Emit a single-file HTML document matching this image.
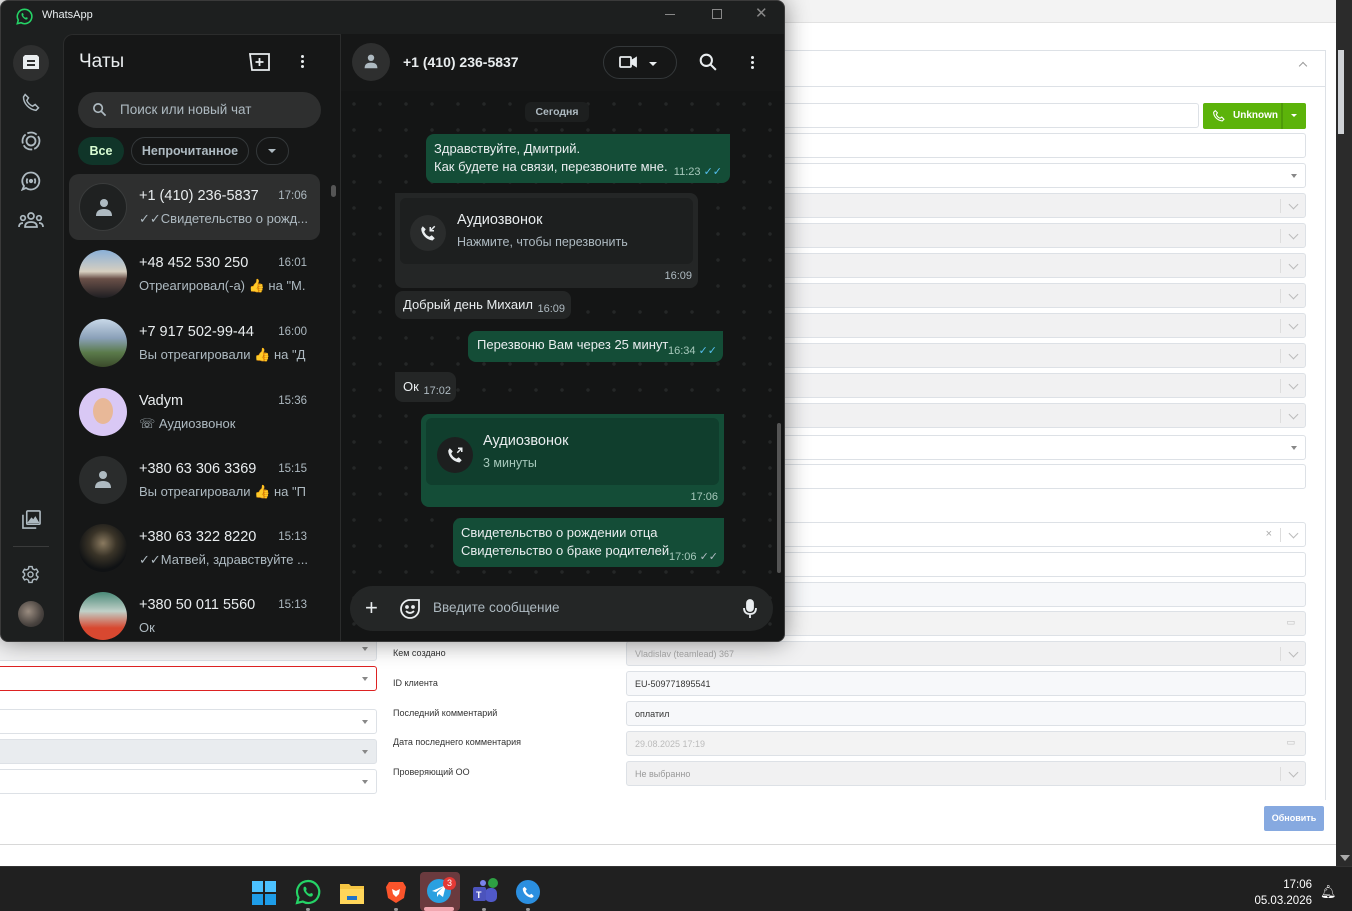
<!DOCTYPE html>
<html><head><meta charset="utf-8"><style>
*{box-sizing:border-box;margin:0;padding:0}
body{width:1352px;height:911px;overflow:hidden;background:#fff;font-family:"Liberation Sans","DejaVu Sans",sans-serif;position:relative}
.a{position:absolute}
.f{position:absolute;border:1px solid #dde1e6;border-radius:3px;background:#fff;height:25px}
.g{background:#f1f1f2}
.lg{background:#f7f8fa}
.dd::after{content:"";position:absolute;right:8px;top:10px;border:3px solid transparent;border-top:4px solid #888}
.ch::after{content:"";position:absolute;right:8px;top:7px;width:6px;height:6px;border-right:1px solid #bbb;border-bottom:1px solid #bbb;transform:rotate(45deg)}
.ch::before{content:"";position:absolute;right:24px;top:5px;width:1px;height:14px;background:#ddd}
.lbl{position:absolute;left:393px;font-size:9px;color:#333}
.ft{position:absolute;font-size:9px;left:8px;top:7px;color:#333}
.wa{position:absolute;left:0;top:0;width:785px;height:642px;background:#1d1f1f;border-radius:8px;overflow:hidden;box-shadow:0 0 24px rgba(0,0,0,.45);border:1px solid #3a3a3a;color:#e9edef}
.s{color:#aebac1}
.it{position:absolute;left:68px;width:251px;height:66px}
.av{position:absolute;left:10px;top:9px;width:48px;height:48px;border-radius:50%;background:#2a2c2c;overflow:hidden}
.nm{position:absolute;left:70px;top:14px;font-size:14.5px;color:#e9edef}
.tm{position:absolute;right:13px;top:16px;font-size:11.5px;color:#aebac1}
.pv{position:absolute;left:70px;top:37px;font-size:13px;color:#aebac1;white-space:nowrap}
.bo{position:absolute;background:#144d37;border-radius:8px;font-size:13px;color:#e9edef;white-space:nowrap}
.bi{position:absolute;background:#242626;border-radius:8px;font-size:13px;color:#e9edef;white-space:nowrap}
.t{font-size:11px;color:#aebac1;white-space:nowrap}
</style></head><body>

<div class="a" style="left:0;top:0;width:1336px;height:23px;background:#f3f3f3;border-bottom:1px solid #e2e2e2"></div>
<div class="a" style="left:0;top:50px;width:1326px;height:1px;background:#dde1e6"></div>
<div class="a" style="left:0;top:86px;width:1326px;height:1px;background:#dde1e6"></div>
<div class="a" style="left:1325px;top:50px;width:1px;height:750px;background:#dde1e6"></div>
<div class="a" style="left:1300px;top:63px;width:6px;height:6px;border-left:1px solid #999;border-top:1px solid #999;transform:rotate(45deg)"></div>
<div class="a" style="left:1336px;top:0;width:16px;height:866px;background:#2b2b2b"></div>
<div class="a" style="left:1338px;top:50px;width:6px;height:84px;background:#cfd2d6"></div>
<div class="a" style="left:1340px;top:855px;border:5px solid transparent;border-top:6px solid #aaa"></div>

<div class="f" style="left:780px;top:103px;width:419px"></div>
<div class="a" style="left:1203px;top:103px;width:103px;height:26px;background:#5cb30a;border-radius:2px;color:#fff;font-size:10px;font-weight:bold">
<svg class="a" style="left:9px;top:6px" width="13" height="13" viewBox="0 0 24 24"><path d="M6 3l4 4-2 3c1 3 4 6 7 7l3-2 4 4-3 3C10 21 3 14 3 6z" fill="none" stroke="#fff" stroke-width="2"/></svg>
<span class="a" style="left:30px;top:7px">Unknown</span>
<div class="a" style="left:78px;top:0;width:2px;height:26px;background:#4e9b09"></div>
<div class="a" style="left:88px;top:11px;border:3px solid transparent;border-top:3px solid #fff"></div></div>
<div class="f" style="left:780px;top:133px;width:526px"></div>
<div class="f dd" style="left:780px;top:163px;width:526px"></div>
<div class="f g ch" style="left:780px;top:193px;width:526px"></div>
<div class="f g ch" style="left:780px;top:223px;width:526px"></div>
<div class="f g ch" style="left:780px;top:253px;width:526px"></div>
<div class="f g ch" style="left:780px;top:283px;width:526px"></div>
<div class="f g ch" style="left:780px;top:313px;width:526px"></div>
<div class="f g ch" style="left:780px;top:343px;width:526px"></div>
<div class="f g ch" style="left:780px;top:373px;width:526px"></div>
<div class="f g ch" style="left:780px;top:403px;width:526px"></div>
<div class="f dd" style="left:780px;top:435px;width:526px"></div>
<div class="f" style="left:780px;top:464px;width:526px"></div>
<div class="f ch" style="left:780px;top:522px;width:526px"><span class="a" style="right:33px;top:5px;font-size:11px;color:#aaa">×</span></div>
<div class="f" style="left:780px;top:552px;width:526px"></div>
<div class="f lg" style="left:780px;top:582px;width:526px"></div>
<div class="f g" style="left:780px;top:611px;width:526px;background:#f3f3f3"><span class="a" style="right:10px;top:5px;font-size:9px;color:#bbb">▭</span></div>
<div class="f g ch" style="left:626px;top:641px;width:680px"><span class="ft" style="color:#aaa">Vladislav (teamlead) 367</span></div>
<div class="f lg" style="left:626px;top:671px;width:680px"><span class="ft">EU-509771895541</span></div>
<div class="f lg" style="left:626px;top:701px;width:680px"><span class="ft">оплатил</span></div>
<div class="f" style="left:626px;top:731px;width:680px;background:#f3f3f3"><span class="ft" style="color:#bbb">29.08.2025 17:19</span><span class="a" style="right:10px;top:5px;font-size:9px;color:#bbb">▭</span></div>
<div class="f g ch" style="left:626px;top:761px;width:680px"><span class="ft" style="color:#999">Не выбранно</span></div>
<div class="lbl" style="top:648px">Кем создано</div>
<div class="lbl" style="top:678px">ID клиента</div>
<div class="lbl" style="top:708px">Последний комментарий</div>
<div class="lbl" style="top:737px">Дата последнего комментария</div>
<div class="lbl" style="top:767px">Проверяющий ОО</div>
<div class="f dd g" style="left:-3px;top:636px;width:380px"></div>
<div class="f dd" style="left:-3px;top:666px;width:380px;border-color:#d22"></div>
<div class="f dd" style="left:-3px;top:709px;width:380px"></div>
<div class="f dd" style="left:-3px;top:739px;width:380px;background:#e9ecef"></div>
<div class="f dd" style="left:-3px;top:769px;width:380px"></div>
<div class="a" style="left:1264px;top:806px;width:60px;height:25px;background:#86a9e0;border-radius:2px;color:#fff;font-size:9px;font-weight:bold;text-align:center;line-height:25px">Обновить</div>
<div class="a" style="left:0;top:844px;width:1336px;height:1px;background:#d8d8d8"></div>

<div class="a" style="left:0;top:866px;width:1352px;height:45px;background:#202020;border-top:1px solid #333"></div>
<svg class="a" style="left:252px;top:881px" width="24" height="24"><rect x="0" y="0" width="11" height="11" fill="#4cc2ff"/><rect x="13" y="0" width="11" height="11" fill="#4cc2ff"/><rect x="0" y="13" width="11" height="11" fill="#1e9de8"/><rect x="13" y="13" width="11" height="11" fill="#1e9de8"/></svg>
<svg class="a" style="left:295px;top:879px" width="26" height="26" viewBox="0 0 26 26"><path d="M13 2a11 11 0 0 0-9.5 16.5L2 24l5.7-1.5A11 11 0 1 0 13 2z" fill="none" stroke="#25d366" stroke-width="2.2"/><path d="M9 8c1-1 2 0 2.5 1.5s-1 1.5 0 3 2 2.3 3 2.3 1.5-1 2.5-.5 1 1.5.5 2.5-2.5 1.5-5-.5-4-4.5-4-6 0-1.8.5-2.3z" fill="#25d366"/></svg>
<svg class="a" style="left:340px;top:882px" width="24" height="22"><path d="M0 2h9l2 2h13v18H0z" fill="#f5c542"/><rect x="0" y="7" width="24" height="15" fill="#ffd65a"/><rect x="7" y="14" width="10" height="4" fill="#1f73c8"/></svg>
<svg class="a" style="left:386px;top:880px" width="20" height="24"><path d="M3 2h14l3 5-2 11-8 5-8-5L0 7z" fill="#fb542b"/><path d="M6 9l4 2 4-2-1 5-3 3-3-3z" fill="#fff"/></svg>
<div class="a" style="left:420px;top:872px;width:40px;height:39px;background:#6a3a3e;border-radius:4px"></div>
<div class="a" style="left:427px;top:879px;width:24px;height:24px;border-radius:50%;background:#2aa0e0"></div>
<svg class="a" style="left:432px;top:885px" width="14" height="12"><path d="M0 6L14 0 11 12 7 9 5 12 5 8 11 2 4 7z" fill="#fff"/></svg>
<div class="a" style="left:443px;top:877px;width:13px;height:13px;border-radius:50%;background:#e53935;color:#fff;font-size:9px;text-align:center;line-height:13px">3</div>
<div class="a" style="left:424px;top:907px;width:30px;height:4px;background:#f1a7b0;border-radius:2px"></div>
<svg class="a" style="left:471px;top:878px" width="30" height="28"><circle cx="12" cy="5" r="3" fill="#7b83eb"/><rect x="14" y="10" width="12" height="14" rx="5" fill="#5059c9"/><rect x="2" y="9" width="13" height="14" rx="2" fill="#4b53bc"/><text x="5" y="20" font-size="9" fill="#fff" font-family="Liberation Sans" font-weight="bold">T</text><circle cx="22" cy="5" r="5" fill="#2ea043"/></svg>
<div class="a" style="left:516px;top:880px;width:24px;height:24px;border-radius:50%;background:#2b8fe0"></div>
<svg class="a" style="left:521px;top:885px" width="14" height="14" viewBox="0 0 24 24"><path d="M6 3l4 4-2 3c1 3 4 6 7 7l3-2 4 4-3 3C10 21 3 14 3 6z" fill="#fff"/></svg>
<div class="a" style="left:306px;top:908px;width:4px;height:3px;background:#999;border-radius:2px"></div>
<div class="a" style="left:394px;top:908px;width:4px;height:3px;background:#999;border-radius:2px"></div>
<div class="a" style="left:482px;top:908px;width:4px;height:3px;background:#999;border-radius:2px"></div>
<div class="a" style="left:526px;top:908px;width:4px;height:3px;background:#999;border-radius:2px"></div>
<div class="a" style="left:1240px;top:877px;width:72px;text-align:right;color:#fff;font-size:11.5px;line-height:16px">17:06<br>05.03.2026</div>
<div class="a" style="left:1320px;top:884px;color:#fff;font-size:13px">🔔︎</div>

<div class="wa">
<svg class="a" style="left:15px;top:7px" width="17" height="17" viewBox="0 0 26 26"><path d="M13 2a11 11 0 0 0-9.5 16.5L2 24l5.7-1.5A11 11 0 1 0 13 2z" fill="none" stroke="#25d366" stroke-width="2.4"/><path d="M9 8c1-1 2 0 2.5 1.5s-1 1.5 0 3 2 2.3 3 2.3 1.5-1 2.5-.5 1 1.5.5 2.5-2.5 1.5-5-.5-4-4.5-4-6 0-1.8.5-2.3z" fill="#25d366"/></svg>
<div class="a" style="left:41px;top:8px;font-size:11px">WhatsApp</div>
<div class="a" style="left:664px;top:13px;width:10px;height:1px;background:#888"></div>
<div class="a" style="left:711px;top:8px;width:10px;height:10px;border:1px solid #888"></div>
<div class="a" style="left:754px;top:3px;color:#888;font-size:15px">✕</div>

<div class="a" style="left:12px;top:44px;width:36px;height:36px;border-radius:50%;background:#2e2f2f"></div>
<svg class="a" style="left:20px;top:52px" width="20" height="20" viewBox="0 0 20 20"><path d="M2 4l2-2h12l2 2v12H2z" fill="#e9edef"/><rect x="6" y="7" width="8" height="2" fill="#2e2f2f"/><rect x="6" y="11" width="8" height="2" fill="#2e2f2f"/></svg>
<svg class="a" style="left:20px;top:91px" width="20" height="20" viewBox="0 0 24 24"><path d="M5 3l4 4-2 3c1 3 4 6 7 7l3-2 4 4-3 3C10 21 3 14 3 6z" fill="none" stroke="#aebac1" stroke-width="1.8"/></svg>
<svg class="a" style="left:20px;top:130px" width="20" height="20" viewBox="0 0 20 20" fill="none" stroke="#aebac1" stroke-width="1.8"><circle cx="10" cy="10" r="8.5" stroke-dasharray="10 2"/><circle cx="10" cy="10" r="4.5"/></svg>
<svg class="a" style="left:20px;top:170px" width="20" height="20" viewBox="0 0 20 20" fill="none" stroke="#aebac1" stroke-width="1.8"><path d="M10 1.5a8.5 8.5 0 1 1-5 15.5L1.5 18.5 3 15A8.5 8.5 0 0 1 10 1.5z"/><circle cx="10" cy="10" r="1.2" fill="#aebac1"/><path d="M6.5 7.5q-1.5 2.5 0 5M13.5 7.5q1.5 2.5 0 5"/></svg>
<svg class="a" style="left:17px;top:210px" width="26" height="18" viewBox="0 0 26 18" fill="none" stroke="#aebac1" stroke-width="1.7"><circle cx="13" cy="5" r="3"/><circle cx="5" cy="7" r="2.3"/><circle cx="21" cy="7" r="2.3"/><path d="M7 16q0-5 6-5t6 5zM1 16q0-4 4-4M25 16q0-4-4-4"/></svg>
<svg class="a" style="left:21px;top:509px" width="19" height="19" viewBox="0 0 20 20" fill="none" stroke="#aebac1" stroke-width="1.7"><rect x="5" y="1" width="14" height="14" rx="1"/><path d="M1 5v14h14"/><path d="M7 13l3-4 2 2 2-3 3 5z" fill="#aebac1"/></svg>
<div class="a" style="left:12px;top:545px;width:36px;height:1px;background:#3a3b3b"></div>
<svg class="a" style="left:20px;top:564px" width="19" height="19" viewBox="0 0 24 24" fill="none" stroke="#aebac1" stroke-width="1.8"><circle cx="12" cy="12" r="3.2"/><path d="M10 2h4l.6 2.8 2.3 1.3 2.7-.9 2 3.5-2.1 1.9v2.7l2.1 1.9-2 3.5-2.7-.9-2.3 1.3L14 22h-4l-.6-2.8-2.3-1.3-2.7.9-2-3.5 2.1-1.9v-2.7L2.4 8.8l2-3.5 2.7.9 2.3-1.3z"/></svg>
<div class="a" style="left:17px;top:600px;width:26px;height:26px;border-radius:50%;background:radial-gradient(circle at 40% 40%,#9a8c80,#4a4440 60%,#2a2828)"></div>

<div class="a" style="left:62px;top:33px;width:278px;height:620px;background:#161717;border-top-left-radius:10px;border-left:1px solid #2b2c2c;border-top:1px solid #2b2c2c"></div>
<div class="a" style="left:78px;top:50px;font-size:19px">Чаты</div>
<svg class="a" style="left:248px;top:52px" width="21" height="18" viewBox="0 0 21 18" fill="none" stroke="#e9edef" stroke-width="1.8"><path d="M1 1h19v16H3z"/><path d="M10.5 5v8M6.5 9h8"/></svg>
<div class="a" style="left:300px;top:54px;width:3px;height:3px;border-radius:50%;background:#e9edef;box-shadow:0 5px 0 #e9edef,0 10px 0 #e9edef"></div>
<div class="a" style="left:77px;top:91px;width:243px;height:36px;border-radius:18px;background:#2e2f2f"></div>
<svg class="a" style="left:91px;top:101px" width="15" height="15" viewBox="0 0 16 16" fill="none" stroke="#aebac1" stroke-width="1.8"><circle cx="6.5" cy="6.5" r="4.5"/><path d="M10 10l4.5 4.5"/></svg>
<div class="a s" style="left:119px;top:101px;font-size:13.5px">Поиск или новый чат</div>
<div class="a" style="left:77px;top:136px;width:46px;height:28px;border-radius:14px;background:#103529;color:#d9fdd3;font-size:12.5px;font-weight:bold;text-align:center;line-height:28px">Все</div>
<div class="a" style="left:130px;top:136px;width:118px;height:28px;border-radius:14px;border:1px solid #34383a;color:#aebac1;font-size:12.5px;font-weight:bold;text-align:center;line-height:26px">Непрочитанное</div>
<div class="a" style="left:255px;top:136px;width:33px;height:28px;border-radius:14px;border:1px solid #34383a"></div>
<div class="a" style="left:267px;top:148px;border:4px solid transparent;border-top:4px solid #aebac1"></div>
<div class="a" style="left:330px;top:184px;width:5px;height:12px;border-radius:3px;background:#555"></div>

<div class="it" style="top:173px;background:#2e2f2f;border-radius:10px"><div class="av" style="border:1px solid #3a3c3c;background:#1f2121"><svg class="a" style="left:14px;top:13px" width="20" height="20" viewBox="0 0 20 20" fill="#aebac1"><circle cx="10" cy="6" r="4"/><path d="M2 19q0-7 8-7t8 7z"/></svg></div><div class="nm">+1 (410) 236-5837</div><div class="tm">17:06</div><div class="pv">✓✓Свидетельство о рожд...</div></div>
<div class="it" style="top:240px"><div class="av" style="background:linear-gradient(#8ab0d8,#d7cfc0 45%,#6a5048 60%,#1e1e22)"></div><div class="nm">+48 452 530 250</div><div class="tm">16:01</div><div class="pv">Отреагировал(-а) <span style="color:#f5b82e">👍</span> на "М.</div></div>
<div class="it" style="top:309px"><div class="av" style="background:linear-gradient(#c8d8e8,#8aa0b8 40%,#5a7a4a 70%,#3a4a2a)"></div><div class="nm">+7 917 502-99-44</div><div class="tm">16:00</div><div class="pv">Вы отреагировали <span style="color:#f5b82e">👍</span> на "Д</div></div>
<div class="it" style="top:378px"><div class="av" style="background:#d9c8f5"><div class="a" style="left:14px;top:10px;width:20px;height:26px;border-radius:50%;background:#e8b898"></div></div><div class="nm">Vadym</div><div class="tm">15:36</div><div class="pv">☏ Аудиозвонок</div></div>
<div class="it" style="top:446px"><div class="av" style="background:#2a2c2c"><svg class="a" style="left:14px;top:13px" width="20" height="20" viewBox="0 0 20 20" fill="#aebac1"><circle cx="10" cy="6" r="4"/><path d="M2 19q0-7 8-7t8 7z"/></svg></div><div class="nm">+380 63 306 3369</div><div class="tm">15:15</div><div class="pv">Вы отреагировали <span style="color:#f5b82e">👍</span> на "П</div></div>
<div class="it" style="top:514px"><div class="av" style="background:radial-gradient(circle at 50% 40%,#8a7a60 0,#3a3428 35%,#101214 70%)"></div><div class="nm">+380 63 322 8220</div><div class="tm">15:13</div><div class="pv">✓✓Матвей, здравствуйте ...</div></div>
<div class="it" style="top:582px"><div class="av" style="background:linear-gradient(#4a8a78,#c0d0c8 40%,#d84830 75%)"></div><div class="nm">+380 50 011 5560</div><div class="tm">15:13</div><div class="pv">Ок</div></div>

<div class="a" style="left:339px;top:33px;width:446px;height:610px;background:#161717;border-left:1px solid #2b2c2c"></div>
<div class="a" style="left:340px;top:90px;width:445px;height:552px;background:#141515;background-image:radial-gradient(circle,#252727 1.5px,transparent 2px);background-size:26px 26px"></div>
<div class="a" style="left:351px;top:42px;width:38px;height:38px;border-radius:50%;background:#2e2f2f"><svg class="a" style="left:11px;top:10px" width="16" height="16" viewBox="0 0 20 20" fill="#aebac1"><circle cx="10" cy="6" r="4"/><path d="M2 19q0-7 8-7t8 7z"/></svg></div>
<div class="a" style="left:402px;top:53px;font-size:14px;font-weight:bold">+1 (410) 236-5837</div>
<div class="a" style="left:602px;top:45px;width:74px;height:33px;border-radius:17px;border:1px solid #34383a"></div>
<svg class="a" style="left:618px;top:54px" width="18" height="14" viewBox="0 0 18 14" fill="none" stroke="#e9edef" stroke-width="1.8"><rect x="1" y="2" width="11" height="10" rx="1"/><path d="M12 6l5-3v8l-5-3" fill="#e9edef"/></svg>
<div class="a" style="left:648px;top:61px;border:4px solid transparent;border-top:4px solid #e9edef"></div>
<svg class="a" style="left:698px;top:52px" width="18" height="18" viewBox="0 0 16 16" fill="none" stroke="#e9edef" stroke-width="1.8"><circle cx="6.5" cy="6.5" r="5"/><path d="M10 10l5 5"/></svg>
<div class="a" style="left:750px;top:55px;width:3px;height:3px;border-radius:50%;background:#e9edef;box-shadow:0 5px 0 #e9edef,0 10px 0 #e9edef"></div>

<div class="a" style="left:524px;top:101px;width:64px;height:20px;border-radius:6px;background:#1d1f1f;color:#aebac1;font-size:10.5px;font-weight:bold;text-align:center;line-height:20px">Сегодня</div>

<div class="bo" style="left:425px;top:133px;width:304px;height:49px;border-top-right-radius:0"><div class="a" style="left:8px;top:6px;line-height:18px">Здравствуйте, Дмитрий.<br>Как будете на связи, перезвоните мне.</div><div class="a t" style="right:8px;top:31px;color:#a6c8bb">11:23 <span style="color:#53bdeb">✓✓</span></div></div>

<div class="bi" style="left:394px;top:192px;width:303px;height:95px;border-top-left-radius:0"><div class="a" style="left:5px;top:5px;width:293px;height:66px;background:#1d1f1f;border-radius:6px"><div class="a" style="left:10px;top:17px;width:36px;height:36px;border-radius:50%;background:#2a2c2c"></div><svg class="a" style="left:19px;top:26px" width="18" height="18" viewBox="0 0 24 24"><path d="M5 3l4 4-2 3c1 3 4 6 7 7l3-2 4 4-3 3C10 21 3 14 3 6z" fill="#e9edef"/><path d="M21 3l-6 6M15 4v5h5" fill="none" stroke="#e9edef" stroke-width="2"/></svg><div class="a" style="left:57px;top:14px;font-size:14.5px">Аудиозвонок</div><div class="a s" style="left:57px;top:37px;font-size:12.5px">Нажмите, чтобы перезвонить</div></div><div class="a t" style="right:6px;top:77px">16:09</div></div>

<div class="bi" style="left:394px;top:290px;width:176px;height:28px"><div class="a" style="left:8px;top:6px">Добрый день Михаил</div><div class="a t" style="right:6px;top:12px">16:09</div></div>

<div class="bo" style="left:467px;top:330px;width:255px;height:31px;border-top-right-radius:0"><div class="a" style="left:9px;top:6px">Перезвоню Вам через 25 минут</div><div class="a t" style="right:6px;top:13px;color:#a6c8bb">16:34 <span style="color:#53bdeb">✓✓</span></div></div>

<div class="bi" style="left:394px;top:371px;width:61px;height:30px;border-top-left-radius:0"><div class="a" style="left:8px;top:7px">Ок</div><div class="a t" style="right:5px;top:13px">17:02</div></div>

<div class="bo" style="left:420px;top:413px;width:303px;height:93px;border-top-right-radius:0"><div class="a" style="left:5px;top:4px;width:293px;height:67px;background:#103e2d;border-radius:6px"><div class="a" style="left:11px;top:19px;width:36px;height:36px;border-radius:50%;background:#1d1f1f"></div><svg class="a" style="left:20px;top:28px" width="18" height="18" viewBox="0 0 24 24"><path d="M5 3l4 4-2 3c1 3 4 6 7 7l3-2 4 4-3 3C10 21 3 14 3 6z" fill="#e9edef"/><path d="M15 9l6-6M16 3h5v5" fill="none" stroke="#e9edef" stroke-width="2"/></svg><div class="a" style="left:57px;top:15px;font-size:14.5px">Аудиозвонок</div><div class="a" style="left:57px;top:38px;font-size:12.5px;color:#a6c8bb">3 минуты</div></div><div class="a t" style="right:6px;top:77px;color:#a6c8bb">17:06</div></div>

<div class="bo" style="left:452px;top:517px;width:271px;height:49px;border-top-right-radius:0"><div class="a" style="left:8px;top:6px;line-height:18px">Свидетельство о рождении отца<br>Свидетельство о браке родителей</div><div class="a t" style="right:6px;top:32px;color:#a6c8bb">17:06 <span style="color:#aebac1">✓✓</span></div></div>

<div class="a" style="left:776px;top:422px;width:4px;height:150px;border-radius:2px;background:#555"></div>

<div class="a" style="left:349px;top:585px;width:423px;height:45px;border-radius:23px;background:#242626"></div>
<div class="a" style="left:364px;top:594px;font-size:22px;color:#e9edef;font-weight:300">+</div>
<svg class="a" style="left:399px;top:598px" width="20" height="20" viewBox="0 0 20 20" fill="none" stroke="#e9edef" stroke-width="1.8"><path d="M19 10a9 9 0 1 1-9-9h9v9z"/><circle cx="7" cy="8" r="1" fill="#e9edef"/><circle cx="13" cy="8" r="1" fill="#e9edef"/><path d="M6 12q4 4 8 0"/></svg>
<div class="a s" style="left:432px;top:599px;font-size:13.5px">Введите сообщение</div>
<svg class="a" style="left:742px;top:598px" width="14" height="20" viewBox="0 0 14 20" fill="none" stroke="#e9edef" stroke-width="1.8"><rect x="4" y="1" width="6" height="11" rx="3" fill="#e9edef"/><path d="M1 9q0 6 6 6t6-6M7 15v4"/></svg>
</div>
</body></html>
